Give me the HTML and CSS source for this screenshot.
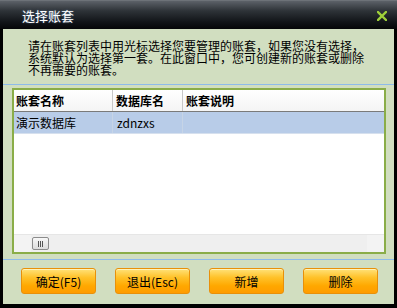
FILE: index.html
```html
<!DOCTYPE html>
<html lang="zh-CN">
<head>
    <meta charset="UTF-8">
    <title>选择账套</title>
    <link rel="stylesheet" href="styles.css">
</head>
<body>
<section class="janela">
    <div class="titulo">
        <span class="titulo-texto">选择账套</span>
        <svg class="fechar" width="10" height="10" viewBox="0 0 10 10">
            <path d="M1 1 L9 9 M9 1 L1 9" stroke="#9fd03a" stroke-width="2.4" stroke-linecap="square"/>
        </svg>
    </div>
    <div class="conteudo">
        <p class="descricao">请在账套列表中用光标选择您要管理的账套，如果您没有选择，<br>系统默认为选择第一套。在此窗口中，您可创建新的账套或删除<br>不再需要的账套。</p>
        <div class="linha"></div>
        <div class="lista">
            <div class="cabecalho">
                <div class="col c1">账套名称</div>
                <div class="col c2">数据库名</div>
                <div class="col c3">账套说明</div>
            </div>
            <div class="item selecionado">
                <div class="col c1">演示数据库</div>
                <div class="col c2">zdnzxs</div>
                <div class="col c3"></div>
            </div>
            <div class="vazio"></div>
            <div class="rolagem">
                <div class="seta"></div>
                <div class="polegar"><span></span><span></span><span></span></div>
                <div class="trilho"></div>
                <div class="seta"></div>
            </div>
        </div>
        <div class="linha linha-baixo"></div>
        <div class="botoes">
            <div class="botao">确定(F5)</div>
            <div class="botao">退出(Esc)</div>
            <div class="botao">新增</div>
            <div class="botao">删除</div>
        </div>
    </div>
</section>
</body>
</html>
```

FILE: styles.css
```css
*{
    margin: 0;
    padding: 0;
    box-sizing: border-box;
}
body{
    background: #000;
    font-family: "Noto Sans CJK SC", "DejaVu Sans", sans-serif;
    font-size: 12px;
    color: #000;
}
.janela{
    width: 397px;
    height: 308px;
    display: flex;
    flex-direction: column;
    background: #000;
}
.titulo{
    height: 29px;
    display: flex;
    align-items: center;
    justify-content: space-between;
    padding: 0 10px 0 22px;
    background: linear-gradient(180deg, #5c6168 0%, #2e3338 35%, #111418 75%, #050608 100%);
    border-top: 1px solid #6d7278;
}
.titulo-texto{
    color: #fff;
    font-size: 13px;
    text-shadow: 0 0 2px rgba(120, 170, 230, 0.6);
}
.fechar{
    display: block;
    margin-top: 1px;
}
.conteudo{
    flex: 1;
    display: flex;
    flex-direction: column;
    background: #d1dec0;
    margin: 0 3px 4px 3px;
}
.descricao{
    margin-top: 11px;
    padding-left: 25px;
    line-height: 12px;
    font-size: 12px;
    white-space: nowrap;
}
.linha{
    height: 1px;
    background: #8ebbea;
    margin-top: 8px;
}
.lista{
    margin: 3px 8px 0 9px;
    height: 166px;
    border: 2px solid #8aad48;
    background: #fff;
    display: flex;
    flex-direction: column;
}
.cabecalho{
    display: flex;
    height: 22px;
    border-bottom: 1px solid #7a7a7a;
    background: linear-gradient(180deg, #ffffff 0%, #f4f4f4 100%);
    font-weight: 700;
}
.col{
    display: flex;
    align-items: center;
    padding-left: 2px;
}
.c1{
    width: 99px;
}
.c2{
    width: 70px;
}
.c3{
    flex: 1;
}
.cabecalho .c1,
.cabecalho .c2{
    border-right: 1px solid #c8c8c8;
}
.cabecalho .c2,
.cabecalho .c3{
    padding-left: 3px;
}
.item{
    display: flex;
    height: 22px;
}
.item .c2{
    padding-left: 4px;
}
.item .c1,
.item .c2{
    border-right: 1px solid #c6d4e6;
}
.selecionado{
    background: #b8cce8;
    border-bottom: 1px solid #d6e0ee;
}
.vazio{
    flex: 1;
}
.rolagem{
    height: 18px;
    display: flex;
    align-items: center;
    background: #efefef;
    border-top: 1px solid #e6e6e6;
}
.seta{
    width: 17px;
    height: 100%;
    background: #f3f3f3;
}
.polegar{
    width: 17px;
    height: 13px;
    margin-left: 1px;
    border: 1px solid #8c8c8c;
    border-radius: 2px;
    background: linear-gradient(180deg, #f8f8f8 0%, #dcdcdc 100%);
    display: flex;
    justify-content: center;
    align-items: flex-end;
    gap: 1px;
    padding-bottom: 2px;
}
.polegar span{
    width: 1px;
    height: 6px;
    background: #555;
}
.trilho{
    flex: 1;
}
.linha-baixo{
    margin-top: 5px;
}
.botoes{
    display: flex;
    justify-content: space-between;
    padding: 0 16px 0 18px;
    margin-top: 8px;
}
.botao{
    width: 75px;
    height: 26px;
    display: flex;
    justify-content: center;
    align-items: center;
    border: 1px solid #e8900a;
    border-radius: 3px;
    background: linear-gradient(180deg, #ffe27a 0%, #ffc22a 35%, #ffa800 70%, #ff9c00 100%);
    box-shadow: inset 0 1px 0 #fff2b8;
    cursor: pointer;
}
```
